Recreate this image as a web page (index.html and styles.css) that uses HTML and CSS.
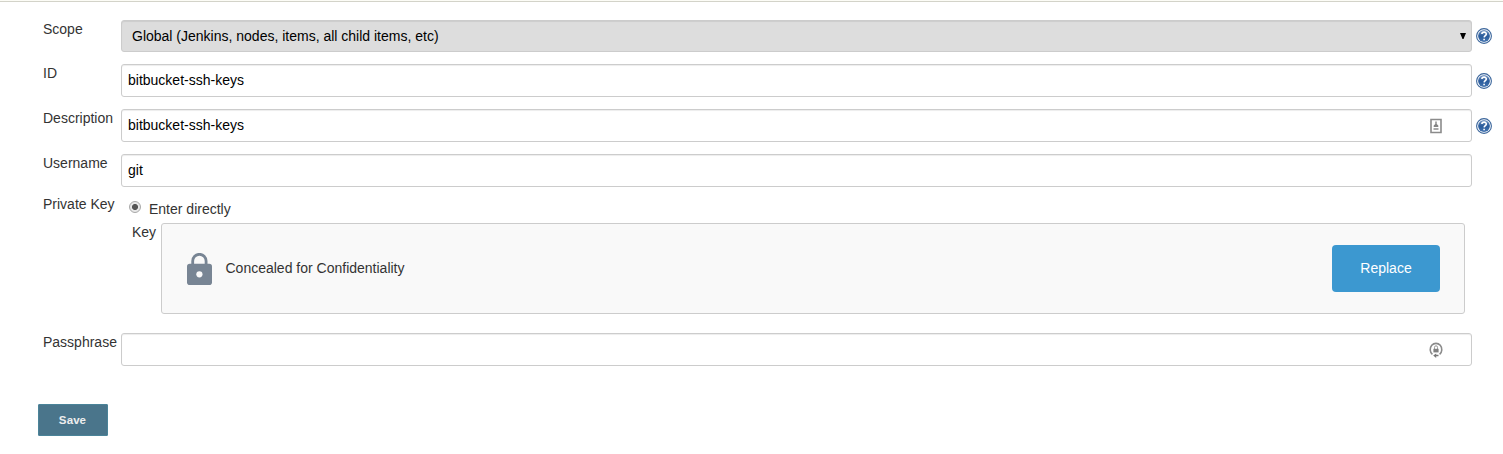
FILE: index.html
```html
<!DOCTYPE html>
<html lang="en">
<head>
<meta charset="utf-8">
<title>Update credentials</title>
<link rel="stylesheet" href="styles.css">
</head>
<body>
<svg class="defs" width="0" height="0" aria-hidden="true">
  <defs>
    <linearGradient id="helpFill" x1="0" y1="0" x2="0" y2="1">
      <stop offset="0" stop-color="#7797c4"/>
      <stop offset="0.5" stop-color="#2a5b9b"/>
      <stop offset="1" stop-color="#4474b0"/>
    </linearGradient>
    <symbol id="help" viewBox="0 0 16 16">
      <circle cx="8" cy="8" r="7.4" fill="#fff" stroke="#3a659b" stroke-width="1.1"/>
      <circle cx="8" cy="8" r="5.9" fill="url(#helpFill)"/>
      <path d="M5.9 6.1C5.9 3.5 10.3 3.5 10.3 6C10.3 7.6 8.2 7.6 8.1 9.4M8.1 10.7V12.2" fill="none" stroke="#fff" stroke-width="1.6"/>
    </symbol>
  </defs>
</svg>
<form class="form">
  <div class="row row-scope">
    <label class="label">Scope</label>
    <div class="field select"><span>Global (Jenkins, nodes, items, all child items, etc)</span><svg class="arrow" viewBox="0 0 6 6"><path d="M0 0H6L3.5 6H2.5Z"/></svg></div>
    <svg class="help"><use href="#help"/></svg>
  </div>
  <div class="row">
    <label class="label">ID</label>
    <div class="field">bitbucket-ssh-keys</div>
    <svg class="help"><use href="#help"/></svg>
  </div>
  <div class="row">
    <label class="label">Description</label>
    <div class="field"><span>bitbucket-ssh-keys</span>
      <svg class="addon" viewBox="0 0 16 16"><path d="M3 1.5H13V14.5H3Z" fill="#fff" stroke="#8b8b8b" stroke-width="1.6"/><path d="M7.3 3.6H8.7V6L10.3 7.5V9H5.7V7.5L7.3 6Z" fill="#858585"/><path d="M5.5 10H10.5V12H5.5Z" fill="#aaa"/></svg>
    </div>
    <svg class="help"><use href="#help"/></svg>
  </div>
  <div class="row row-user">
    <label class="label">Username</label>
    <div class="field">git</div>
  </div>
  <div class="row row-key">
    <label class="label">Private Key</label>
    <div class="key-area">
      <div class="choice"><span class="radio"></span><span class="choice-text">Enter directly</span></div>
      <div class="key-row">
        <label class="key-label">Key</label>
        <div class="secret">
          <svg class="lock" viewBox="0 0 26 32"><path d="M5.7 12V8a6.7 6.7 0 0 1 13.4 0V12" fill="none" stroke="#788594" stroke-width="2.8"/><rect x="0" y="10.8" width="25" height="21.2" rx="2.8" fill="#788594"/><circle cx="12.4" cy="21.3" r="3.1" fill="#f9f9f9"/></svg>
          <span class="secret-text">Concealed for Confidentiality</span>
          <button class="replace" type="button">Replace</button>
        </div>
      </div>
    </div>
  </div>
  <div class="row">
    <label class="label">Passphrase</label>
    <div class="field">
      <svg class="addon" viewBox="0 0 16 16"><path d="M4.4 12.4A5.8 6.2 0 1 1 11.6 12.4" fill="none" stroke="#8b8b8b" stroke-width="1.6"/><path d="M5.4 6.8H10.6V10.4H5.4Z" fill="#808080"/><path d="M6.5 7V5.3a1.5 1.5 0 0 1 3 0V7" fill="none" stroke="#999"/><path d="M5.2 13.5L8.2 11.4V12.7H10.5V14.3H8.2V16Z" fill="#777"/></svg>
    </div>
  </div>
  <button class="save" type="button">Save</button>
</form>
</body>
</html>
```
FILE: styles.css
```css
* { box-sizing: border-box; }
body {
  margin: 0;
  background: #fff;
  color: #333;
  font: 14px/20px "Liberation Sans", Arial, sans-serif;
}
.defs { display: block; }
.form {
  height: 454px;
  padding: 17px 0 0 43px;
  border-top: 1px solid #fcfcf6;
  box-shadow: inset 0 1px #d3d3c9;
}
.row {
  display: grid;
  grid-template-columns: 78px 1351px 20px;
  align-items: start;
  height: 45px;
}
.row-scope { padding-top: 1px; }
.row-user { height: 41px; }
.row-key { height: 138px; grid-template-columns: 78px 1351px; }
.label { white-space: nowrap; }
.field {
  display: flex;
  align-items: center;
  height: 33px;
  margin-top: 1px;
  padding: 0 27px 2px 6px;
  border: 1px solid #ccc;
  border-radius: 3px;
  box-shadow: inset 0 1px 1px rgba(0, 0, 0, .075);
  color: #000;
}
.select {
  height: 32px;
  padding: 0 5px 1px 10px;
  justify-content: space-between;
  background: #ddd;
}
.arrow { width: 6px; height: 6px; fill: #000; }
.help { width: 16px; height: 16px; margin: 10px 0 0 4px; }
.row-scope .help { margin-top: 9px; }
.addon { width: 16px; height: 16px; margin: 2px 0 0 auto; }
.choice { display: flex; height: 28px; padding: 5px 0 0 8px; }
.radio {
  width: 12px;
  height: 12px;
  margin: 2px 8px 0 0;
  border: 1px solid #a8a8a8;
  border-radius: 50%;
  background: radial-gradient(circle, #555 0 2.7px, #e8e8e8 3.3px);
}
.key-row { display: flex; padding-left: 11px; }
.key-label { width: 29px; }
.secret {
  display: flex;
  align-items: center;
  width: 1304px;
  height: 91px;
  margin-top: 1px;
  padding: 0 24px 0 25px;
  border: 1px solid #ccc;
  border-radius: 3px;
  background: #f9f9f9;
}
.lock { width: 26px; height: 32px; margin-right: 12.5px; }
.secret-text { padding-bottom: 1px; }
.replace {
  width: 108px;
  height: 47px;
  margin-left: auto;
  padding: 0 0 1px;
  border: 0;
  border-radius: 4px;
  background: #3c98d0;
  color: #fff;
  font: inherit;
}
.save {
  display: block;
  width: 70px;
  height: 32px;
  margin: 27px 0 0 -5px;
  padding: 0 1px 0 0;
  border: 1px solid #4b8499;
  border-radius: 1px;
  background: #4a758b;
  color: #eee;
  font: bold 11.5px/20px "Liberation Sans", Arial, sans-serif;
  letter-spacing: .1px;
}
```
